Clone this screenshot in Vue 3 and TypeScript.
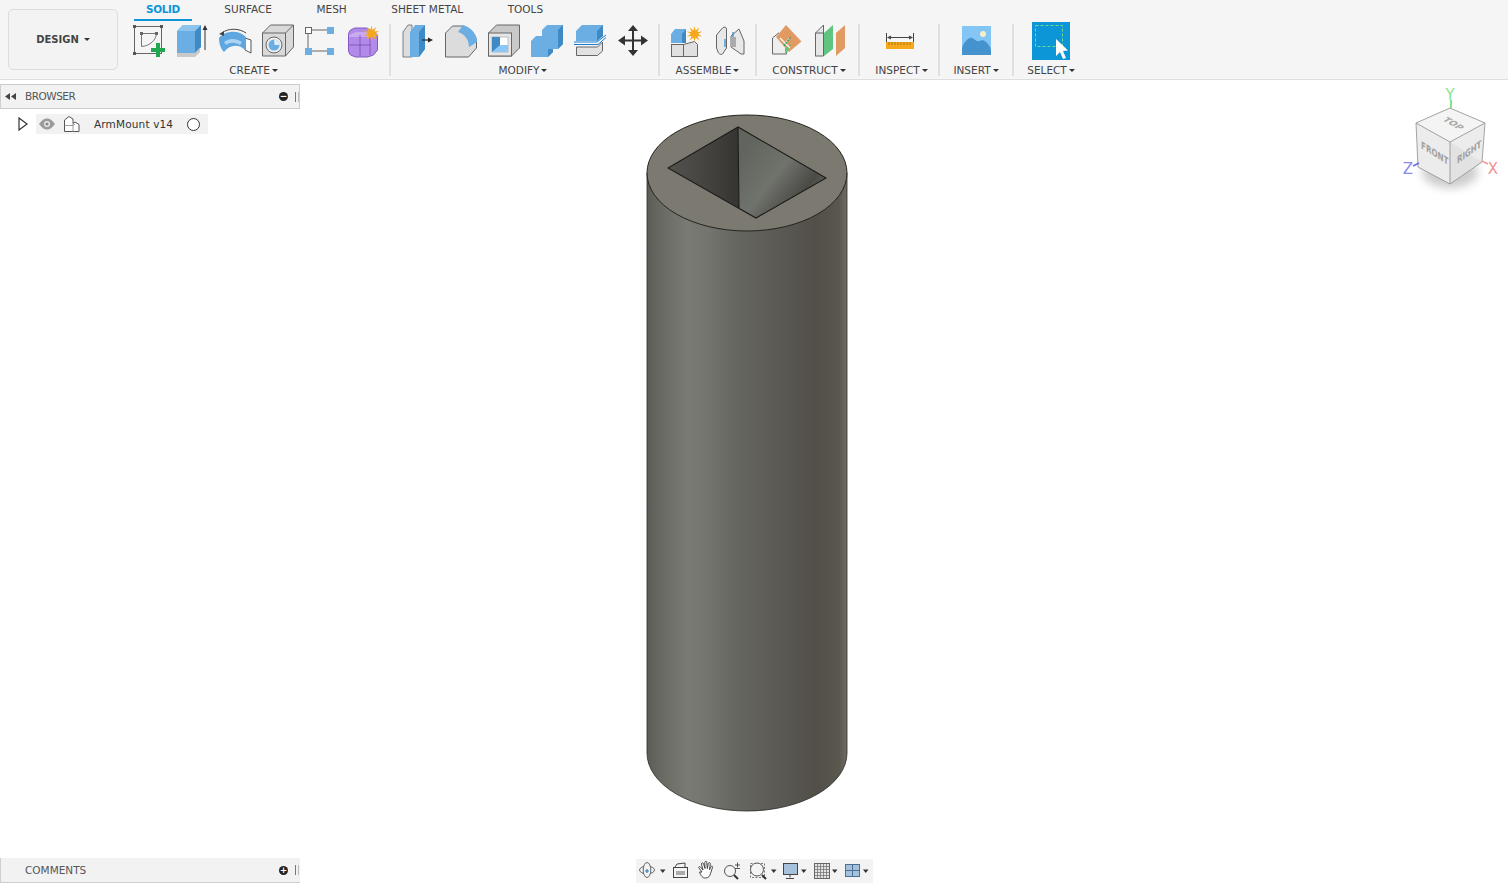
<script setup lang="ts">
interface Tab { name: string; active?: boolean }
const tabs: Tab[] = [
  { name: 'SOLID', active: true },
  { name: 'SURFACE' },
  { name: 'MESH' },
  { name: 'SHEET METAL' },
  { name: 'TOOLS' },
]

function star(cx: number, cy: number, outer: number, inner: number, rays: number): string {
  const pts: string[] = []
  for (let i = 0; i < rays * 2; i++) {
    const r = i % 2 === 0 ? outer : inner
    const a = (Math.PI * i) / rays - Math.PI / 2
    pts.push(`${(cx + r * Math.cos(a)).toFixed(2)},${(cy + r * Math.sin(a)).toFixed(2)}`)
  }
  return pts.join(' ')
}
const createStar = star(371.5, 33.5, 8, 3.6, 10)
const assembleStar = star(694.5, 34, 8, 3.6, 10)
</script>

<template>
  <div class="app">
    <header class="ribbon">
      <button class="design">DESIGN<i class="caret"></i></button>
      <div class="ribbon-main">
        <nav class="tabs">
          <span v-for="t in tabs" :key="t.name" class="tab" :class="{ active: t.active }">{{ t.name }}</span>
        </nav>
        <div class="groups">
          <section class="group g-create">
            <div class="icons">
              <svg class="ic" viewBox="130 23 36 36">
                <rect x="134.500" y="26.500" width="27" height="27" fill="none" stroke="#666" stroke-width="1"/>
                <rect x="133" y="25" width="3" height="3" fill="#555"/><rect x="160" y="25" width="3" height="3" fill="#555"/><rect x="133" y="52" width="3" height="3" fill="#555"/>
                <path d="M141.500 46.500V33.500H156.500C156 40 150 46 141.500 46.500Z" fill="none" stroke="#777" stroke-width="1"/>
                <rect x="140" y="32" width="3" height="3" fill="#666"/><rect x="155" y="32" width="3" height="3" fill="#666"/>
                <path d="M156 43h4v5h5v4h-5v5h-4v-5h-5v-4h5z" fill="#1fa84f"/>
              </svg>
              <svg class="ic" viewBox="173 23 36 36">
                <path d="M177 53V31l6-6h18v22l-6 6z" fill="#6aaee3"/>
                <path d="M195 31l6-6v22l-6 6z" fill="#3f8ac4"/>
                <path d="M177 31l6-6h18l-6 6z" fill="#8cc4ee"/>
                <path d="M177 53h18l5-5v4l-5 5h-18z" fill="#c9c9c9"/>
                <path d="M205 50V28" stroke="#333" stroke-width="1"/><path d="M205 25l-2.500 5h5z" fill="#333"/>
              </svg>
              <svg class="ic" viewBox="216 23 36 36">
                <path d="M245 38l6 2v13l-6-3z" fill="#fff" stroke="#555"/>
                <path d="M219 38c7-8 20-8 27-1v14c-6-7-16-7-22 1-3-3-5-8-5-14z" fill="#5ea6df"/>
                <path d="M224 42c5-4 12-4 18 0l-2 3c-5-3-10-3-14 0z" fill="#a9d4f4"/>
                <path d="M222 33c6-5 17-5 24 0" fill="none" stroke="#444"/><path d="M219 34l5-3v5z" fill="#444"/>
              </svg>
              <svg class="ic" viewBox="259 23 36 36">
                <path d="M262.500 33l8-8h23v22l-8 9h-23z" fill="#d9d9d9" stroke="#666"/>
                <path d="M262.500 33h23v23M285.500 33l8-8" fill="none" stroke="#666"/>
                <circle cx="274" cy="45" r="8" fill="#eee" stroke="#666"/>
                <circle cx="274" cy="45" r="5.500" fill="#6aaee3"/>
                <path d="M274 39.500a5.500 5.500 0 0 1 5.500 5.500h-5z" fill="#e2eef7"/>
              </svg>
              <svg class="ic" viewBox="302 23 36 36">
                <path d="M309 30h18M308 33v16M311 51h16" stroke="#666" fill="none"/>
                <rect x="305.500" y="27.500" width="6" height="6" fill="#fff" stroke="#666"/>
                <rect x="327" y="27" width="7" height="7" fill="#6aaee3"/>
                <rect x="305" y="48" width="7" height="7" fill="#6aaee3"/>
                <rect x="327" y="48" width="7" height="7" fill="#6aaee3"/>
              </svg>
              <svg class="ic" viewBox="345 23 36 36">
                <path d="M348.500 35q0-3 2-5l4-2h12l8 4q3 2 3 5v13l-4 5-6 2h-12l-5-2q-2-2-2-5z" fill="#b28ae8" stroke="#8358c0"/>
                <path d="M349 35l7-3h13l8 3-2 2h-26z" fill="#c8aaf0"/>
                <path d="M349 45h22M360 35v21M370 36v19" stroke="#7a4fb5" stroke-width=".8" fill="none"/>
                <polygon :points="createStar" fill="#f6a81c"/>
              </svg>
            </div>
            <div class="label">CREATE<i class="caret"></i></div>
          </section>
          <section class="group g-modify">
            <div class="icons">
              <svg class="ic" viewBox="399 23 36 36">
                <path d="M403 32l5-7h4v32h-9z" fill="#ddd" stroke="#666" stroke-width=".8"/>
                <path d="M410 32l5-7h10v24l-6 8h-9z" fill="#6aaee3"/>
                <path d="M419 32l6-7v24l-6 8z" fill="#3f8ac4"/>
                <path d="M422 40h7" stroke="#222" stroke-width="1.200"/><path d="M433 40l-5-2.500v5z" fill="#222"/>
              </svg>
              <svg class="ic" viewBox="442 23 36 36">
                <path d="M445.500 33l7-7h10c8 2 14 9 14 16v6l-8 9h-23z" fill="#dcdcdc" stroke="#666"/>
                <path d="M458 32l5-7c8 2 14 9 14 17l-8 5c0-7-4-13-11-15z" fill="#6aaee3"/>
              </svg>
              <svg class="ic" viewBox="485 23 36 36">
                <path d="M488.500 33l8-8h23v23l-8 8h-23z" fill="#c9c9c9" stroke="#666"/>
                <rect x="488.500" y="33" width="23" height="23" fill="#e6e6e6" stroke="#666"/>
                <rect x="492" y="37" width="16" height="15" fill="#fff" stroke="#999" stroke-width=".6"/>
                <path d="M492 37h8v8h8v7h-16z" fill="#3f8ac4"/><path d="M500 45h8v7h-16z" fill="#8cc8f6"/>
              </svg>
              <svg class="ic" viewBox="528 23 36 36">
                <path d="M531 41l5-5h6v-6l5-5h16v19l-5 5h-5v3l-5 5h-17z" fill="#6aaee3"/>
                <path d="M558 30l5-5v19l-5 5z" fill="#3f8ac4"/>
                <path d="M548 49h5v3l-5 5z" fill="#3f8ac4"/>
              </svg>
              <svg class="ic" viewBox="571 23 36 36">
                <path d="M576 31l6-6h21v11l-6 5h-21z" fill="#6aaee3"/><path d="M597 31l6-6v11l-6 5z" fill="#3f8ac4"/>
                <path d="M574 42h23l9-7M574 44.500h24l8-7" fill="none" stroke="#1a7fd0" stroke-width="1"/>
                <path d="M576.500 47h21l5-5v9l-5 4.500h-21z" fill="#e2e2e2" stroke="#666"/>
              </svg>
              <svg class="ic" viewBox="614 23 36 36">
                <path d="M620 40.500h26M633 28v26" stroke="#333" stroke-width="2"/>
                <path d="M633 25l-5 6h10zM633 56l-5-6h10zM618 40.500l7-5v10zM648 40.500l-7-5v10z" fill="#333"/>
              </svg>
            </div>
            <div class="label">MODIFY<i class="caret"></i></div>
          </section>
          <section class="group g-assemble">
            <div class="icons">
              <svg class="ic" viewBox="668 23 36 36">
                <rect x="671.500" y="44.500" width="12" height="12" fill="#e0e0e0" stroke="#666"/>
                <path d="M683.500 44.500l11-3 3 3v12h-14z" fill="#e0e0e0" stroke="#666"/>
                <path d="M671 34l4-5h11v14h-15z" fill="#6aaee3"/><path d="M682 34l4-5v14h-4z" fill="#3f8ac4"/>
                <polygon :points="assembleStar" fill="#f6a81c"/>
              </svg>
              <svg class="ic" viewBox="712 23 36 36">
                <path d="M716.500 35l6-7c2-1.500 4-1 4 1v19l-4 6c-2 1-3 0-4-1l-2-5z" fill="#e8e8e8" stroke="#666"/>
                <path d="M731 36l8-7 5 12v13l-3 0-10-7z" fill="#e8e8e8" stroke="#666"/>
                <path d="M725 39v8M733 32v12" stroke="#2a8ad4" stroke-width="1.200"/>
                <rect x="731" y="37" width="5" height="10" fill="#aaa"/>
              </svg>
            </div>
            <div class="label">ASSEMBLE<i class="caret"></i></div>
          </section>
          <section class="group g-construct">
            <div class="icons">
              <svg class="ic" viewBox="768 23 36 36">
                <path d="M772.500 38l6-5 8 5v16h-14z" fill="#eee" stroke="#666"/>
                <path d="M786 25l15.500 16.500L789 52l-13-15z" fill="#e29a63"/>
                <path d="M785 48l6-4-4 9h-2z" fill="#5ec47f"/>
                <path d="M780 38l10 10M790 37l-4 5" stroke="#fff" stroke-width="1.200"/>
                <path d="M784 46l7-10" stroke="#2ea35c" stroke-width="1.500" stroke-dasharray="2 1"/>
              </svg>
              <svg class="ic" viewBox="812 23 36 36">
                <path d="M815.500 33l8-8v24l-8 7z" fill="#e6e6e6" stroke="#666"/>
                <path d="M815.500 33h8v23h-8z" fill="#e6e6e6" stroke="#666"/>
                <path d="M824 33l9-8v24l-9 7z" fill="#5ec47f"/>
                <path d="M836 33l9-8v23l-9 8z" fill="#e29a63"/>
              </svg>
            </div>
            <div class="label">CONSTRUCT<i class="caret"></i></div>
          </section>
          <section class="group g-inspect">
            <div class="icons">
              <svg class="ic" viewBox="882 23 36 36">
                <path d="M886.500 33v9M913.500 33v9M888 37.500h24" stroke="#444" fill="none"/>
                <path d="M887 37.500l4-2v4zM913 37.500l-4-2v4z" fill="#444"/>
                <rect x="886" y="42" width="28" height="7" fill="#f5a81c"/>
                <path d="M889 42v3M892 42v3M895 42v3M898 42v3M901 42v3M904 42v3M907 42v3M910 42v3" stroke="#a06d10" stroke-width=".8"/>
              </svg>
            </div>
            <div class="label">INSPECT<i class="caret"></i></div>
          </section>
          <section class="group g-insert">
            <div class="icons">
              <svg class="ic" viewBox="958 23 36 36">
                <rect x="962" y="26" width="29" height="29" fill="#83c5f5"/>
                <path d="M962 48c2-6 7-11 10-10s4 4 7 3 5-1 7 1 4 4 5 8v5h-29z" fill="#4593ce"/>
                <circle cx="983" cy="34" r="3" fill="#f3efc9"/>
              </svg>
            </div>
            <div class="label">INSERT<i class="caret"></i></div>
          </section>
          <section class="group g-select">
            <div class="icons">
              <svg class="ic" viewBox="1033 23 36 36">
                <rect x="1032" y="22" width="38" height="38" fill="#0c96d8"/>
                <rect x="1035.500" y="25.500" width="27" height="21" fill="none" stroke="#6fdc8c" stroke-dasharray="3 2"/>
                <path d="M1056 39v17l4-4 3 7 3-1-3-7 5-.5z" fill="#fff"/>
              </svg>
            </div>
            <div class="label">SELECT<i class="caret"></i></div>
          </section>
        </div>
      </div>
    </header>

    <main class="viewport">
      <svg class="scene" width="1508" height="885" viewBox="0 0 1508 885">
        <defs>
          <linearGradient id="body" x1="647" x2="847" y1="0" y2="0" gradientUnits="userSpaceOnUse">
            <stop offset="0" stop-color="#5c5c56"/>
            <stop offset=".06" stop-color="#676860"/>
            <stop offset=".2" stop-color="#797a73"/>
            <stop offset=".3" stop-color="#74756e"/>
            <stop offset=".45" stop-color="#666660"/>
            <stop offset=".65" stop-color="#5b5a54"/>
            <stop offset=".84" stop-color="#524f49"/>
            <stop offset=".96" stop-color="#5a574f"/>
            <stop offset="1" stop-color="#6f6c62"/>
          </linearGradient>
          <linearGradient id="wallL" x1="668" x2="739" y1="170" y2="170" gradientUnits="userSpaceOnUse">
            <stop offset="0" stop-color="#53524d"/>
            <stop offset=".55" stop-color="#444340"/>
            <stop offset="1" stop-color="#353431"/>
          </linearGradient>
          <linearGradient id="wallR" x1="745" x2="815" y1="150" y2="205" gradientUnits="userSpaceOnUse">
            <stop offset="0" stop-color="#62645e"/>
            <stop offset=".45" stop-color="#70726c"/>
            <stop offset=".8" stop-color="#4b4b46"/>
            <stop offset="1" stop-color="#6a6b64"/>
          </linearGradient>
          <filter id="soft" x="-30%" y="-30%" width="160%" height="160%"><feGaussianBlur stdDeviation="5"/></filter>
        </defs>

        <path d="M647 173V753A100 58 0 0 0 847 753V173Z" fill="url(#body)"/>
        <path d="M647 173V753A100 58 0 0 0 847 753V173" fill="none" stroke="#2a2a28" stroke-width=".8"/>
        <ellipse cx="747" cy="173" rx="100" ry="58" fill="#7c7a70" stroke="#24241f" stroke-width="1"/>
        <path d="M738 127L668 168L739 208Z" fill="url(#wallL)"/>
        <path d="M738 127L826 178L756 218L739 208Z" fill="url(#wallR)"/>
        <path d="M738 127L668 168L756 218L826 178ZM738 127L739 208" fill="none" stroke="#1c1c1a" stroke-width="1.100"/>

        <ellipse cx="1450" cy="172" rx="28" ry="16" fill="#000" opacity=".2" filter="url(#soft)"/>
        <path d="M1450 108L1485 123L1482 162L1450 184L1418 167L1416 123Z" fill="#ececec"/>
        <path d="M1450 108L1485 123L1450 142L1416 123Z" fill="#f4f4f4"/>
        <path d="M1450 142L1482 162L1450 184Z" fill="#e2e2e2"/>
        <path d="M1450 108L1485 123L1482 162L1450 184L1418 167L1416 123ZM1416 123L1450 142L1485 123M1450 142V184" fill="none" stroke="#8d8d8d" stroke-width=".8"/>
        <path d="M1451 108V100" stroke="#7fe58a" stroke-width="2"/>
        <path d="M1419 163L1413 166" stroke="#6a6ce8" stroke-width="1.500"/>
        <path d="M1482 161L1488 164" stroke="#f59a9a" stroke-width="1.500"/>
        <text x="1450" y="100" class="axis" fill="#88e68f">Y</text>
        <text x="1408" y="174" class="axis" fill="#8a8cf0">Z</text>
        <text x="1493" y="174" class="axis" fill="#f58f8f">X</text>
        <text class="cube" transform="matrix(.86 .5 -.86 .5 1442 120)" fill="#a8a8a8">TOP</text>
        <text class="cube" transform="matrix(.8 .5 0 1.100 1421 148)" fill="#a0a0a0">FRONT</text>
        <text class="cube" transform="matrix(.78 -.55 0 1.100 1457 164)" fill="#a0a0a0">RIGHT</text>
      </svg>

      <aside class="browser">
        <div class="panel-head browser-head">
          <svg class="rew" width="11" height="7" viewBox="0 0 11 7"><path d="M5 0v7L0 3.500zM11 0v7L6 3.500z" fill="#444"/></svg>
          <span class="panel-title browser-title">BROWSER</span>
          <span class="panel-btn">−</span>
          <i class="panel-grip"></i>
        </div>
        <div class="tree-row">
          <svg class="expander" width="10" height="14" viewBox="0 0 10 14"><path d="M1 1l8 6-8 6z" fill="#fff" stroke="#333" stroke-width="1.200"/></svg>
          <div class="tree-item">
            <svg width="18" height="12" viewBox="0 0 18 12"><path d="M1 6c3-4 5-5.500 8-5.500S14 2 17 6c-3 4-5 5.500-8 5.500S4 10 1 6z" fill="#9b9b9b"/><circle cx="9" cy="6" r="3" fill="#e8e8e8"/><circle cx="9" cy="6" r="1.600" fill="#8a8a8a"/></svg>
            <svg class="comp" width="18" height="18" viewBox="0 0 18 18"><path d="M1.500 5l4.500-3.500 4 2.500v4.500l2-1.500 4 2.500v7h-14.500z" fill="#fff" stroke="#555"/><path d="M1.500 10.500h8.500v6.500M10 8.500l0 2M10 10.500l2-1.500" fill="none" stroke="#888" stroke-width=".8"/></svg>
            <span class="tree-name">ArmMount v14</span>
            <i class="radio"></i>
          </div>
        </div>
      </aside>

      <aside class="comments">
        <div class="panel-head comments-head">
          <span class="panel-title">COMMENTS</span>
          <span class="panel-btn">+</span>
          <i class="panel-grip"></i>
        </div>
      </aside>

      <div class="navbar">
        <svg width="32" height="24" viewBox="636 859 32 24">
          <ellipse cx="647" cy="870" rx="7.500" ry="3.800" fill="none" stroke="#555" stroke-width=".9"/>
          <ellipse cx="647" cy="870" rx="3.800" ry="7.500" fill="#f3f3f3" stroke="#555" stroke-width=".9"/>
          <path d="M645 871h4M647 869v4" stroke="#2a7fc8" stroke-width="1.200"/>
          <path d="M660 869.500h5.500l-2.750 3.500z" fill="#333"/>
        </svg>
        <svg width="26" height="24" viewBox="668 859 26 24">
          <rect x="673.500" y="867.500" width="14" height="10" fill="#f4f4f4" stroke="#444"/>
          <rect x="676" y="871" width="9" height="4" fill="#aaa"/>
          <path d="M675 867l2-3 8-1v4" fill="none" stroke="#444"/>
        </svg>
        <svg width="25" height="24" viewBox="694 859 25 24">
          <path d="M702 872l-3-4c-1-1 .5-2 1.500-1l2.500 3-1.500-6c0-1.500 1.500-1.500 2-.5l1.500 5-.2-6c0-1.500 2-1.500 2 0l.5 6 1-5c.3-1.300 2-1 2 .2l-.8 6 1.500-3c.6-1 2-.5 1.500.8l-2 6c-.6 2.500-2 4.500-5 4.500-3 0-4.500-2-6-6z" fill="#fff" stroke="#333" stroke-width=".9"/>
        </svg>
        <svg width="26" height="24" viewBox="719 859 26 24">
          <circle cx="730" cy="871" r="5.500" fill="#f4f4f4" stroke="#555"/>
          <path d="M734 875l4 4" stroke="#333" stroke-width="2"/>
          <path d="M735 865h5M737.500 862.500v5M735 868.500h5" stroke="#444" stroke-width=".9" fill="none"/>
        </svg>
        <svg width="35" height="24" viewBox="745 859 35 24">
          <rect x="750.500" y="863.500" width="14" height="14" fill="none" stroke="#777" stroke-dasharray="2 1.500"/>
          <circle cx="757" cy="869.500" r="6.500" fill="#f4f4f4" stroke="#555"/>
          <path d="M762 875l4 4" stroke="#333" stroke-width="2"/>
          <path d="M771 869.500h5.500l-2.750 3.500z" fill="#333"/>
        </svg>
        <svg width="30" height="24" viewBox="780 859 30 24">
          <rect x="783.500" y="863.500" width="14" height="11" fill="#a5c1dc" stroke="#444"/>
          <path d="M790 875v2.500M786 878.500h8" stroke="#444"/>
          <path d="M801 869.500h5.500l-2.750 3.500z" fill="#333"/>
        </svg>
        <svg width="30" height="24" viewBox="810 859 30 24">
          <rect x="814.500" y="863.500" width="15" height="15" fill="#e4e4e4" stroke="#666"/>
          <path d="M817.500 864v14M820.500 864v14M823.500 864v14M826.500 864v14M815 866.500h14M815 869.500h14M815 872.500h14M815 875.500h14" stroke="#777" stroke-width=".8"/>
          <path d="M832 869.500h5.500l-2.750 3.500z" fill="#333"/>
        </svg>
        <svg width="33" height="24" viewBox="840 859 33 24">
          <rect x="845.500" y="864.500" width="14" height="12" fill="#a5c1dc" stroke="#4a6f99"/>
          <path d="M852.500 865v11M846 870.500h13" stroke="#4a6f99" stroke-width="1"/>
          <path d="M863 869.500h5.500l-2.750 3.500z" fill="#333"/>
        </svg>
      </div>
    </main>
  </div>
</template>

<style>
html, body { margin: 0; background: #fff; }
</style>

<style scoped>
.app {
  width: 1508px;
  height: 885px;
  display: flex;
  flex-direction: column;
  overflow: hidden;
  position: relative;
  font-family: "DejaVu Sans", "Open Sans", sans-serif;
  font-size: 10.5px;
  color: #444;
}
.ribbon {
  height: 79px;
  flex: none;
  display: flex;
  background: #f5f5f5;
  border-bottom: 1px solid #dedede;
}
.design {
  width: 110px;
  height: 61px;
  margin: 9px 0 0 8px;
  box-sizing: border-box;
  border: 1px solid #dcdcdc;
  border-radius: 5px;
  background: #f3f3f3;
  font: bold 10px "DejaVu Sans", sans-serif;
  color: #444;
  padding: 0;
}
.caret {
  display: inline-block;
  width: 0;
  height: 0;
  margin: 0 0 2px 2px;
  border-left: 3px solid transparent;
  border-right: 3px solid transparent;
  border-top: 3px solid #333;
}
.design .caret { margin-left: 5px; }
.ribbon-main { margin-left: 2px; display: flex; flex-direction: column; }
.tabs {
  height: 22px;
  display: flex;
  gap: 20.500px;
  margin-left: 14px;
}
.tab {
  height: 22px;
  padding: 3px 12px 0;
  box-sizing: border-box;
  line-height: 12px;
  white-space: nowrap;
}
.tab.active {
  color: #0c96d8;
  font-weight: bold;
  letter-spacing: -.4px;
  position: relative;
}
.tab.active::after {
  content: "";
  position: absolute;
  left: 0;
  right: 0;
  top: 19px;
  height: 2px;
  background: #0c96d8;
}
.groups { display: flex; height: 52px; margin-top: 2px; }
.group {
  display: flex;
  flex-direction: column;
  align-items: center;
  box-sizing: border-box;
  border-right: 2px solid #e0e0e0;
  height: 52px;
}
.g-create { width: 271px; padding-left: 1px; }
.g-modify { width: 269px; }
.g-create .label { margin-right: 3px; }
.g-modify .label { margin-right: 3px; }
.g-assemble { width: 97px; padding-left: 1px; }
.g-assemble .label { margin-right: 1px; }
.g-construct { width: 103px; padding-left: 1px; }
.g-construct .label { margin-left: 2px; }
.g-inspect { width: 80px; padding-left: 2px; }
.g-inspect .label { margin-left: 3px; }
.g-insert { width: 74px; }
.g-select { width: 74px; border-right: none; }
.icons { display: flex; gap: 7px; height: 36px; margin-top: -1px; flex: none; }
.g-assemble .icons, .g-construct .icons { gap: 8px; }
.ic { width: 36px; height: 36px; display: block; overflow: visible; }
.label {
  margin-top: 5px;
  line-height: 13px;
  white-space: nowrap;
}
.viewport { flex: 1; }
.scene { position: absolute; left: 0; top: 0; pointer-events: none; }
.axis { font: 15px "DejaVu Sans", sans-serif; text-anchor: middle; }
.cube { font: bold 9px "DejaVu Sans", sans-serif; }
.browser {
  position: absolute;
  left: 0;
  top: 84px;
  width: 300px;
}
.panel-head {
  height: 25px;
  box-sizing: border-box;
  display: flex;
  align-items: center;
  background: #f2f2f2;
  border-left: 1px solid #d0d0d0;
  border-bottom: 1px solid #cdcdcd;
  position: relative;
}
.browser-head { border-top: 1px solid #cdcdcd; border-right: 1px solid #cdcdcd; }
.rew { margin-left: 4px; }
.panel-title { color: #555; position: absolute; left: 24px; }
.browser-title { letter-spacing: -.5px; margin-top: -1px; }
.panel-btn {
  position: absolute;
  left: 278px;
  width: 9px;
  height: 9px;
  border-radius: 50%;
  background: #222;
  color: #fff;
  font: bold 9px/9px "DejaVu Sans", sans-serif;
  text-align: center;
}
.panel-grip {
  position: absolute;
  left: 294px;
  top: 7px;
  width: 2px;
  height: 10px;
  border-left: 1px solid #777;
  border-right: 1px solid #bbb;
}
.tree-row { display: flex; align-items: center; height: 20px; margin-top: 5px; }
.expander { margin-left: 18px; flex: none; }
.tree-item {
  margin-left: 8px;
  width: 172px;
  height: 20px;
  background: #f2f2f2;
  display: flex;
  align-items: center;
}
.tree-item svg:first-child { margin-left: 2px; }
.comp { margin-left: 7px; }
.tree-name { margin-left: 13px; color: #333; letter-spacing: .15px; white-space: nowrap; width: 79px; }
.radio {
  margin-left: 14px;
  width: 11px;
  height: 11px;
  border: 1px solid #333;
  border-radius: 50%;
  background: #fff;
}
.comments {
  position: absolute;
  left: 0;
  top: 858px;
  width: 300px;
}
.navbar {
  position: absolute;
  left: 636px;
  top: 859px;
  height: 24px;
  display: flex;
  background: #f3f3f3;
}
.navbar svg { display: block; }
</style>
